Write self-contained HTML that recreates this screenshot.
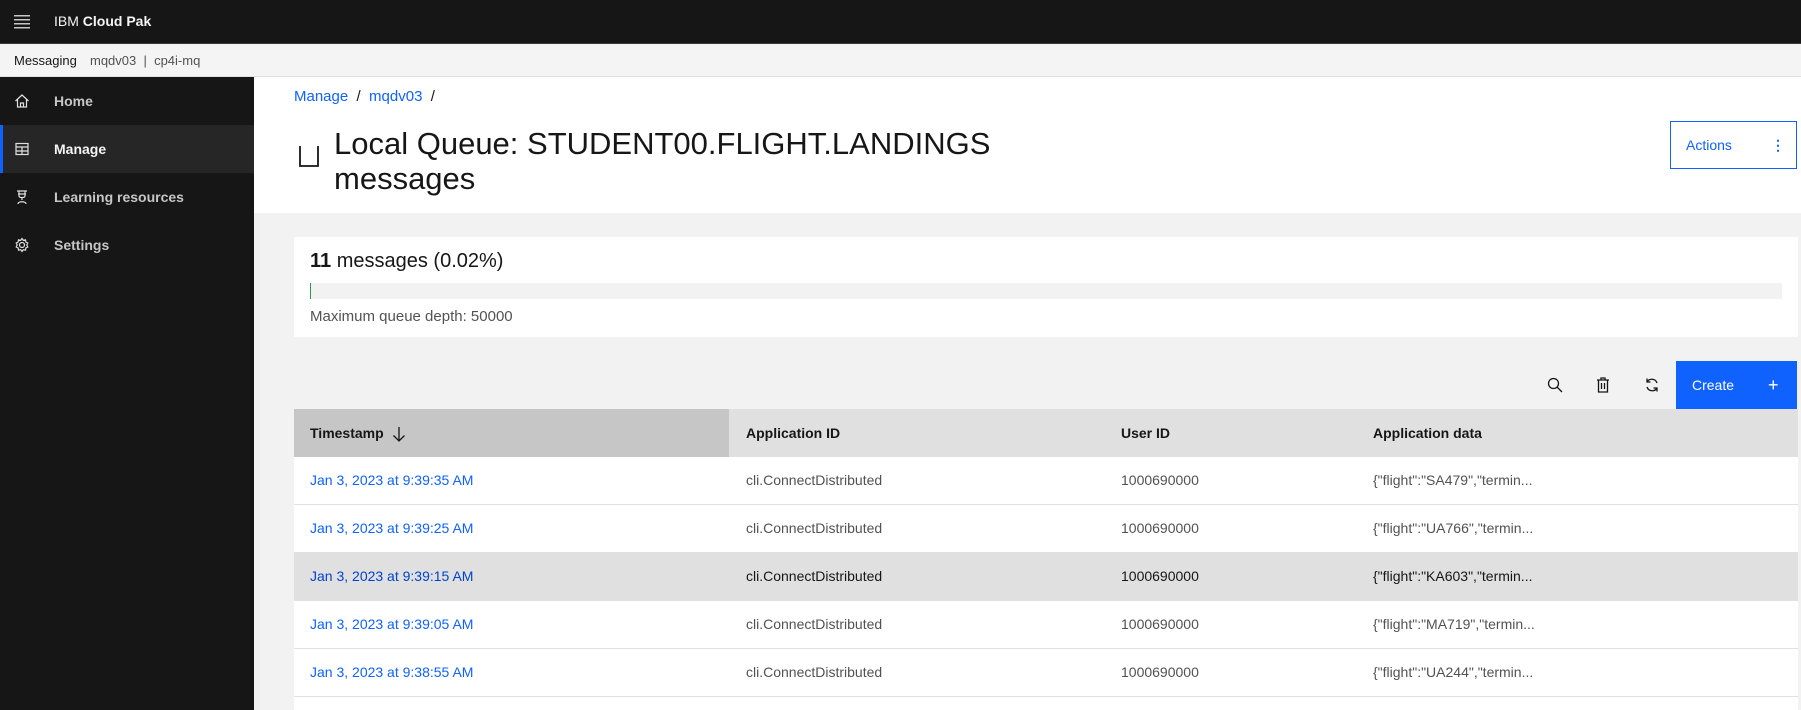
<!DOCTYPE html>
<html><head><meta charset="utf-8"><style>
*{box-sizing:border-box;margin:0;padding:0}
html,body{width:1801px;height:710px;overflow:hidden}
body{background:#f2f2f2;font-family:"Liberation Sans",sans-serif;color:#161616;position:relative}
.abs{position:absolute}
.hdr{left:0;top:0;width:1801px;height:44px;background:#161616;border-bottom:1px solid #393939}
.bc{left:0;top:45px;width:1801px;height:32px;background:#f4f4f4;border-bottom:1px solid #e0e0e0;font-size:13px;color:#393939}
.side{left:0;top:77px;width:254px;height:633px;background:#161616}
.nav{position:absolute;left:0;width:254px;height:48px;color:#c6c6c6;font-size:14px;font-weight:bold;line-height:48px;padding-left:54px}
.nav svg{position:absolute;left:14px;top:16px}
.main{left:254px;top:77px;width:1547px;height:136px;background:#fff}
.row{position:absolute;left:294px;width:1504px;height:48px;background:#fff;border-bottom:1px solid #e0e0e0;font-size:14px;line-height:47px;color:#525252}
.row span{position:absolute}
.c1{left:16px;color:#0f62fe}.c2{left:452px}.c3{left:827px}.c4{left:1079px}
</style></head><body>
<div class="abs hdr">
<svg class="abs" style="left:14px;top:15px" width="16" height="14"><g fill="#c6c6c6"><rect y="0" width="16" height="1.5"/><rect y="4" width="16" height="1.5"/><rect y="8" width="16" height="1.5"/><rect y="12" width="16" height="1.5"/></g></svg>
<div class="abs" style="left:54px;top:13px;font-size:14px;color:#f4f4f4">IBM <b>Cloud Pak</b></div>
</div>
<div class="abs bc"><span class="abs" style="left:14px;top:8px;color:#161616">Messaging</span><span class="abs" style="left:90px;top:8px;color:#525252">mqdv03 &nbsp;|&nbsp; cp4i-mq</span></div>
<div class="abs side">
<div class="nav" style="top:0"><svg width="16" height="16" fill="none" stroke="#e0e0e0" stroke-width="1.2"><path d="M1.5 8 8 2l6.5 6M3.5 6.5V14h9V6.5M6.5 14v-4h3v4"/></svg>Home</div>
<div class="nav" style="top:48px;background:#262626;color:#f4f4f4;box-shadow:inset 3px 0 0 #0f62fe"><svg width="16" height="16" fill="none" stroke="#e0e0e0" stroke-width="1.2"><rect x="2" y="2.5" width="12" height="11"/><path d="M2 6h12M2 10h12M8 6v7.5"/></svg>Manage</div>
<div class="nav" style="top:96px"><svg width="16" height="16" fill="none" stroke="#e0e0e0" stroke-width="1.2"><path d="M3 2h10M4 5h8M5 2v5c0 2 6 2 6 0V2M8 9v2M4 15c0-3 8-3 8 0"/></svg>Learning resources</div>
<div class="nav" style="top:144px"><svg width="16" height="16" fill="none" stroke="#e0e0e0" stroke-width="1.2"><circle cx="8" cy="8" r="2.5"/><path d="M8 1.5l1.3 1.8 2.2-.5.3 2.2 2 1-1 2 1 2-2 1-.3 2.2-2.2-.5L8 14.5l-1.3-1.8-2.2.5-.3-2.2-2-1 1-2-1-2 2-1 .3-2.2 2.2.5z"/></svg>Settings</div>
</div>
<div class="abs main"></div>
<div class="abs" style="left:294px;top:88px;font-size:15px;color:#0f62fe">Manage <span style="color:#161616">&nbsp;/&nbsp;</span> mqdv03 <span style="color:#161616">&nbsp;/</span></div>
<svg class="abs" style="left:298px;top:145px" width="24" height="24" fill="none" stroke="#161616" stroke-width="1.8"><path d="M2 1v20h18V1"/></svg>
<div class="abs" style="left:334px;top:126px;font-size:31px;line-height:35px;color:#161616;white-space:nowrap">Local Queue: STUDENT00.FLIGHT.LANDINGS<br>messages</div>
<div class="abs" style="left:1670px;top:121px;width:127px;height:48px;border:1px solid #0f62fe;background:#fff;color:#0f62fe;font-size:14px;line-height:46px;padding-left:15px">Actions<span class="abs" style="left:100px;top:0;font-weight:bold">⋮</span></div>
<div class="abs" style="left:294px;top:237px;width:1504px;height:100px;background:#fff">
<div class="abs" style="left:16px;top:13px;font-size:20px"><b>11</b> messages (0.02%)</div>
<div class="abs" style="left:16px;top:46px;width:1472px;height:16px;background:#f2f2f2"><div style="width:1px;height:16px;background:#24a148"></div></div>
<div class="abs" style="left:16px;top:71px;font-size:15px;color:#525252">Maximum queue depth: 50000</div>
</div>
<svg class="abs" style="left:1547px;top:377px" width="16" height="16" fill="none" stroke="#161616" stroke-width="1.3"><circle cx="6.5" cy="6.5" r="5"/><path d="M10 10l5 5"/></svg>
<svg class="abs" style="left:1595px;top:377px" width="16" height="16" fill="none" stroke="#161616" stroke-width="1.3"><path d="M2 3h12M6 3V1h4v2M3.5 3v12h9V3M6.5 6v6M9.5 6v6"/></svg>
<svg class="abs" style="left:1644px;top:377px" width="16" height="16" fill="none" stroke="#161616" stroke-width="1.3"><path d="M13 6A5.5 5.5 0 0 0 3 5M3 1.5V5h3.5M3 10a5.5 5.5 0 0 0 10 1M13 14.5V11H9.5"/></svg>
<div class="abs" style="left:1676px;top:361px;width:121px;height:48px;background:#0f62fe;color:#fff;font-size:14px;line-height:48px;padding-left:16px">Create<span class="abs" style="left:92px;font-size:18px">+</span></div>
<div class="abs" style="left:294px;top:409px;width:1504px;height:48px;background:#e0e0e0;font-size:14px;font-weight:bold;line-height:48px">
<div class="abs" style="left:0;top:0;width:435px;height:48px;background:#c6c6c6"></div>
<span class="abs" style="left:16px">Timestamp</span>
<svg class="abs" style="left:98px;top:17px" width="14" height="16" fill="none" stroke="#161616" stroke-width="1.3"><path d="M7 1v14M1.5 9.5 7 15l5.5-5.5"/></svg>
<span class="abs" style="left:452px">Application ID</span><span class="abs" style="left:827px">User ID</span><span class="abs" style="left:1079px">Application data</span>
</div>
<div class="row" style="top:457px"><span class="c1">Jan 3, 2023 at 9:39:35 AM</span><span class="c2">cli.ConnectDistributed</span><span class="c3">1000690000</span><span class="c4">{"flight":"SA479","termin...</span></div>
<div class="row" style="top:505px"><span class="c1">Jan 3, 2023 at 9:39:25 AM</span><span class="c2">cli.ConnectDistributed</span><span class="c3">1000690000</span><span class="c4">{"flight":"UA766","termin...</span></div>
<div class="row" style="top:553px;background:#e0e0e0;color:#161616"><span class="c1" style="color:#0043ce">Jan 3, 2023 at 9:39:15 AM</span><span class="c2">cli.ConnectDistributed</span><span class="c3">1000690000</span><span class="c4">{"flight":"KA603","termin...</span></div>
<div class="row" style="top:601px"><span class="c1">Jan 3, 2023 at 9:39:05 AM</span><span class="c2">cli.ConnectDistributed</span><span class="c3">1000690000</span><span class="c4">{"flight":"MA719","termin...</span></div>
<div class="row" style="top:649px"><span class="c1">Jan 3, 2023 at 9:38:55 AM</span><span class="c2">cli.ConnectDistributed</span><span class="c3">1000690000</span><span class="c4">{"flight":"UA244","termin...</span></div>
<div class="row" style="top:697px;height:13px;border:none"></div>
</body></html>
